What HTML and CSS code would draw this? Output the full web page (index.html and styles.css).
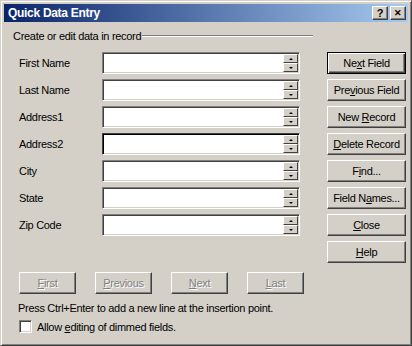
FILE: index.html
```html
<!DOCTYPE html>
<html lang="en">
<head>
  <meta charset="UTF-8">
  <meta name="viewport" content="width=device-width, initial-scale=1.0">
  <title>Quick Data Entry</title>
  <link rel="stylesheet" href="styles.css">
</head>
<body>
  <div class="window">
    <div class="titlebar">
      <span class="title">Quick Data Entry</span>
      <div class="title-buttons">
        <span class="tb-btn">?</span>
        <span class="tb-btn tb-close">&#x2715;</span>
      </div>
    </div>

    <div class="group-head">
      <span>Create or edit data in record</span>
      <span class="etch"></span>
    </div>

    <div class="main">
      <div class="fields">
        <div class="row"><label>First Name</label><div class="field"><span class="spin"><i class="up"></i><i class="down"></i></span></div></div>
        <div class="row"><label>Last Name</label><div class="field"><span class="spin"><i class="up"></i><i class="down"></i></span></div></div>
        <div class="row"><label>Address1</label><div class="field"><span class="spin"><i class="up"></i><i class="down"></i></span></div></div>
        <div class="row"><label>Address2</label><div class="field focus"><span class="spin"><i class="up"></i><i class="down"></i></span></div></div>
        <div class="row"><label>City</label><div class="field"><span class="spin"><i class="up"></i><i class="down"></i></span></div></div>
        <div class="row"><label>State</label><div class="field"><span class="spin"><i class="up"></i><i class="down"></i></span></div></div>
        <div class="row"><label>Zip Code</label><div class="field"><span class="spin"><i class="up"></i><i class="down"></i></span></div></div>
      </div>
      <div class="actions">
        <button class="btn default">Ne<u>x</u>t Field</button>
        <button class="btn">Pre<u>v</u>ious Field</button>
        <button class="btn">New <u>R</u>ecord</button>
        <button class="btn"><u>D</u>elete Record</button>
        <button class="btn">F<u>i</u>nd...</button>
        <button class="btn">Field N<u>a</u>mes...</button>
        <button class="btn"><u>C</u>lose</button>
        <button class="btn"><u>H</u>elp</button>
      </div>
    </div>

    <div class="nav">
      <button class="btn disabled"><u>F</u>irst</button>
      <button class="btn disabled"><u>P</u>revious</button>
      <button class="btn disabled"><u>N</u>ext</button>
      <button class="btn disabled"><u>L</u>ast</button>
    </div>

    <p class="hint">Press Ctrl+Enter to add a new line at the insertion point.</p>

    <div class="check-row">
      <span class="checkbox"></span>
      <span>Allow <u>e</u>diting of dimmed fields.</span>
    </div>
  </div>
</body>
</html>
```

FILE: styles.css
```css
body {
  margin: 0;
  background-color: #d4d0c8;
  font-family: "Liberation Sans", Arial, sans-serif;
  font-size: 11px;
  letter-spacing: -0.3px;
  color: #000;
}
.window {
  box-sizing: border-box;
  width: 412px;
  height: 346px;
  padding: 3px;
  border: 1px solid;
  border-color: #d4d0c8 #404040 #404040 #d4d0c8;
  box-shadow: inset 1px 1px #fff, inset -1px -1px #808080;
  background: #d4d0c8;
}
.titlebar {
  height: 18px;
  display: flex;
  align-items: center;
  justify-content: space-between;
  padding: 0 2px 0 4px;
  background: linear-gradient(to right, #0a246a, #a6caf0);
}
.title {
  color: #fff;
  font-weight: bold;
  font-size: 12px;
}
.title-buttons {
  display: flex;
  gap: 2px;
}
.tb-btn {
  box-sizing: border-box;
  width: 16px;
  height: 14px;
  display: flex;
  align-items: center;
  justify-content: center;
  background: #d4d0c8;
  border: 1px solid;
  border-color: #fff #404040 #404040 #fff;
  box-shadow: inset -1px -1px #808080;
  font-weight: bold;
  font-size: 11px;
  letter-spacing: 0;
  line-height: 1;
}
.tb-close {
  font-size: 9px;
}
.group-head {
  display: flex;
  align-items: center;
  height: 13px;
  margin: 7px 0 0 9px;
  width: 300px;
}
.etch {
  flex: 1;
  height: 0;
  margin-left: 1px;
  border-top: 1px solid #808080;
  border-bottom: 1px solid #fff;
}
.main {
  display: flex;
  gap: 27px;
  margin-top: 10px;
  padding-left: 15px;
}
.fields {
  display: flex;
  flex-direction: column;
  gap: 5px;
}
.row {
  display: flex;
  align-items: center;
  height: 22px;
}
.row label {
  width: 83px;
}
.field {
  box-sizing: border-box;
  position: relative;
  width: 198px;
  height: 22px;
  background: #fff;
  border: 1px solid;
  border-color: #808080 #fff #fff #808080;
  box-shadow: inset 1px 1px #404040, inset -1px -1px #d4d0c8;
}
.field.focus {
  border-color: #404040 #fff #fff #404040;
  box-shadow: inset 1px 1px #000, inset -1px -1px #d4d0c8;
}
.spin {
  position: absolute;
  right: 1px;
  top: 1px;
  bottom: 1px;
  width: 15px;
  display: flex;
  flex-direction: column;
}
.spin i {
  flex: 1;
  position: relative;
  background: #d4d0c8;
  border: 1px solid;
  border-color: #fff #404040 #404040 #fff;
}
.spin i::after {
  content: "";
  position: absolute;
  left: 50%;
  top: 50%;
  margin: -1px 0 0 -2px;
  border-left: 2px solid transparent;
  border-right: 2px solid transparent;
}
.spin .up::after {
  border-bottom: 2px solid #000;
}
.spin .down::after {
  border-top: 2px solid #000;
}
.actions {
  display: flex;
  flex-direction: column;
  gap: 5px;
}
.btn {
  box-sizing: border-box;
  height: 22px;
  padding: 0;
  background: #d4d0c8;
  border: 1px solid;
  border-color: #fff #404040 #404040 #fff;
  box-shadow: inset -1px -1px #808080;
  font-family: inherit;
  font-size: 11px;
  letter-spacing: -0.3px;
  color: #000;
}
.actions .btn {
  width: 79px;
}
.btn.default {
  border: 1px solid #000;
  box-shadow: inset 1px 1px #fff, inset -1px -1px #404040, inset -2px -2px #808080;
}
.nav {
  display: flex;
  gap: 19px;
  margin-top: 9px;
  padding-left: 15px;
}
.nav .btn {
  width: 57px;
}
.btn.disabled {
  color: #808080;
  text-shadow: 1px 1px #fff;
}
.hint {
  margin: 8px 0 0 14px;
  line-height: 13px;
}
.check-row {
  display: flex;
  align-items: center;
  gap: 5px;
  margin: 5px 0 0 15px;
  height: 13px;
}
.checkbox {
  box-sizing: border-box;
  width: 13px;
  height: 13px;
  background: #fff;
  border: 1px solid;
  border-color: #808080 #fff #fff #808080;
  box-shadow: inset 1px 1px #404040, inset -1px -1px #d4d0c8;
}
```
